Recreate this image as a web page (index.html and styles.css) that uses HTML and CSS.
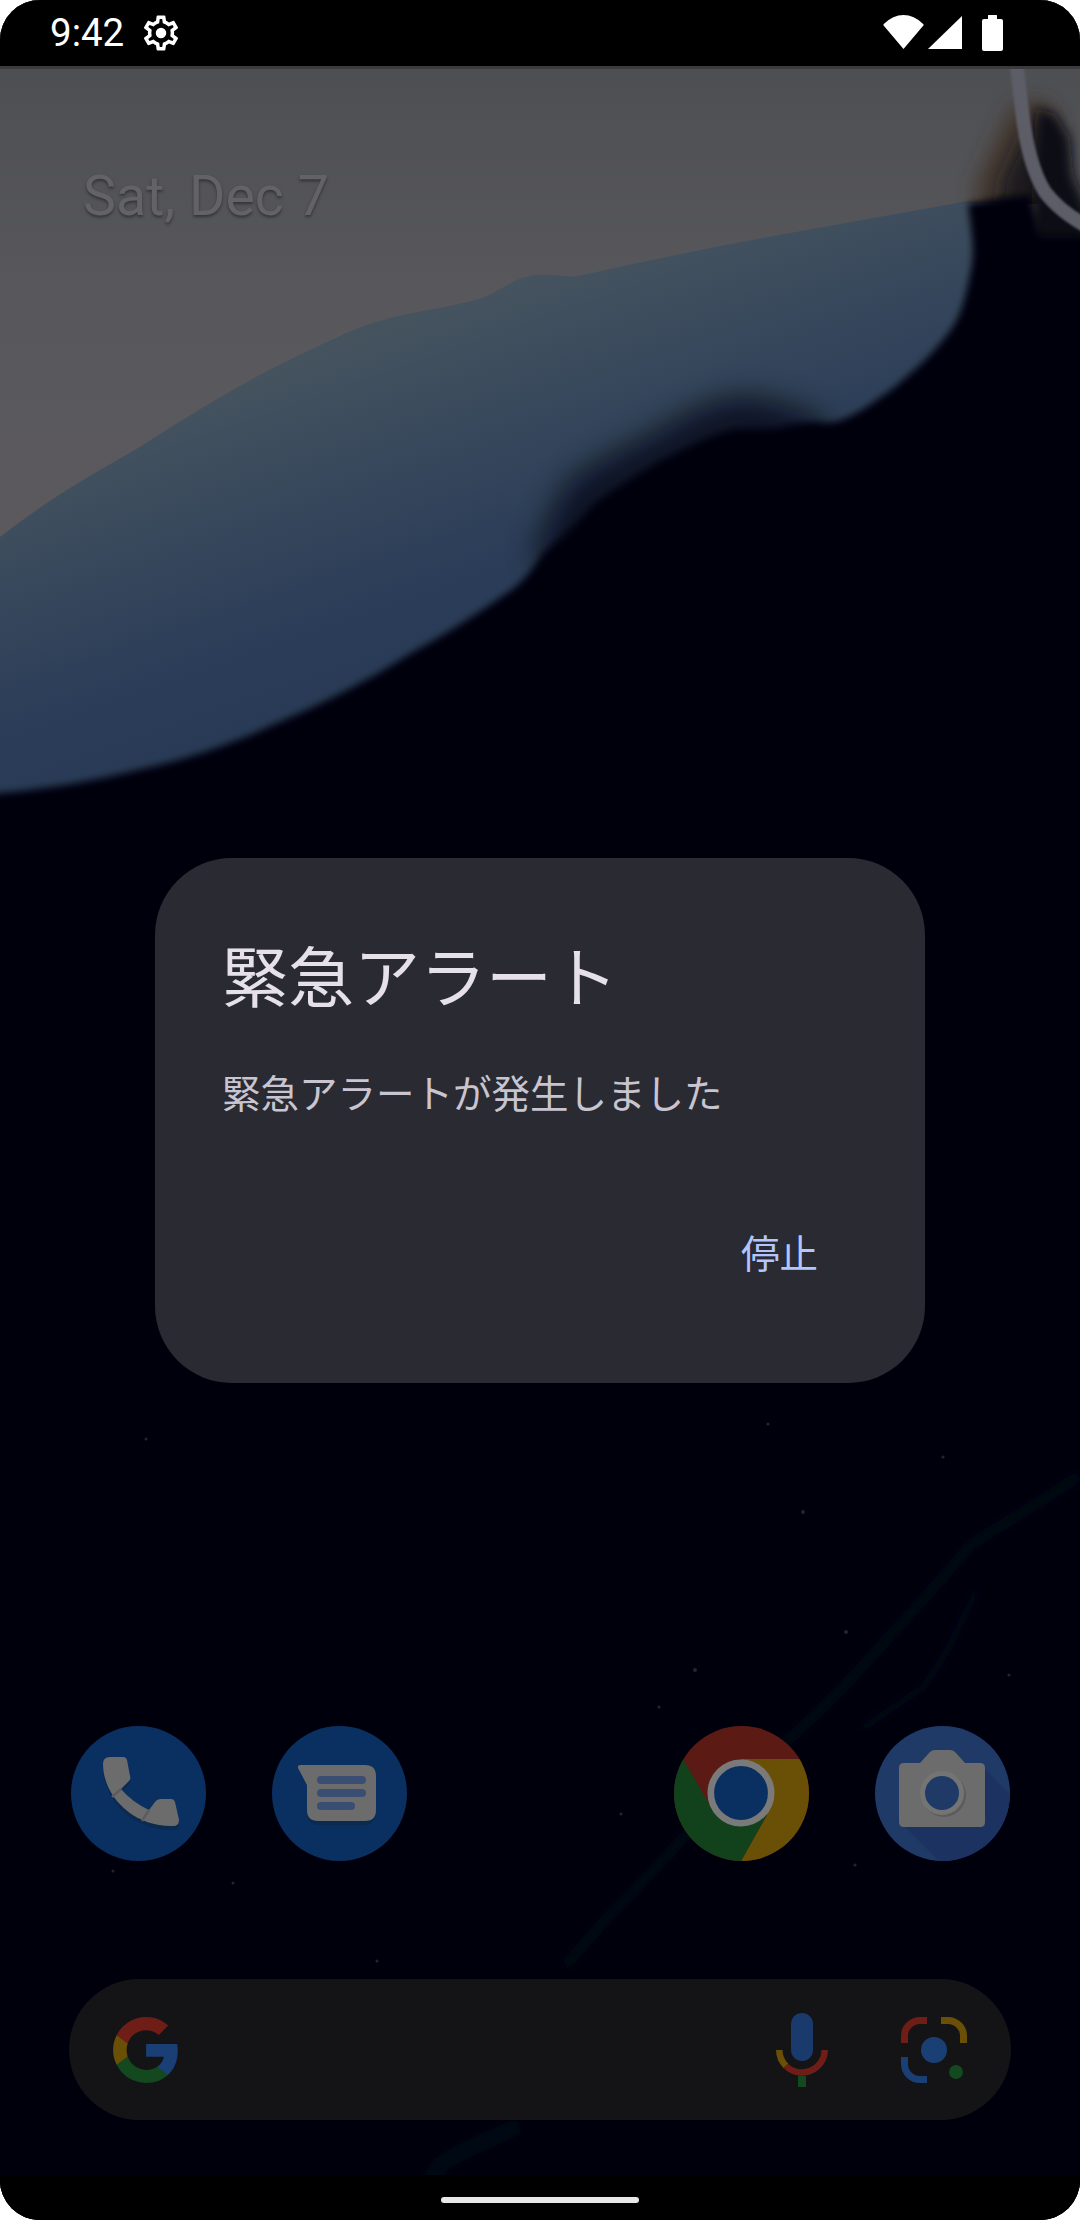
FILE: index.html
```html
<!DOCTYPE html>
<html lang="ja">
<head>
<meta charset="utf-8">
<title>緊急アラート</title>
<link rel="stylesheet" href="styles.css">
</head>
<body>
<div class="device">
  <div class="screen">
    <svg class="wallpaper" viewBox="0 0 1080 2220" width="1080" height="2220" aria-hidden="true">
      <defs>
        <linearGradient id="wpGrey" gradientUnits="userSpaceOnUse" x1="0" y1="69" x2="0" y2="520">
          <stop offset="0" stop-color="#4e4f53"/>
          <stop offset="0.5" stop-color="#58585c"/>
          <stop offset="1" stop-color="#5b595c"/>
        </linearGradient>
        <linearGradient id="wpBlue" gradientUnits="userSpaceOnUse" x1="480" y1="298" x2="645" y2="770">
          <stop offset="0" stop-color="#45535f"/>
          <stop offset="0.25" stop-color="#37485c"/>
          <stop offset="0.5" stop-color="#2b3d58"/>
          <stop offset="1" stop-color="#223451"/>
        </linearGradient>
        <clipPath id="aboveBlue"><rect x="900" y="60" width="180" height="144"/></clipPath>
        <filter id="blurS" x="-20%" y="-20%" width="140%" height="140%"><feGaussianBlur stdDeviation="3.500"/></filter>
        <filter id="blurF" x="-40%" y="-40%" width="180%" height="180%"><feGaussianBlur stdDeviation="6"/></filter>
        <filter id="blurM" x="-60%" y="-60%" width="220%" height="220%"><feGaussianBlur stdDeviation="9"/></filter>
        <filter id="blurL" x="-50%" y="-50%" width="200%" height="200%"><feGaussianBlur stdDeviation="16"/></filter>
        <filter id="blurT" x="-20%" y="-20%" width="140%" height="140%"><feGaussianBlur stdDeviation="1.200"/></filter>
      </defs>
      <rect width="1080" height="2220" fill="#03030a"/>
      <rect width="1080" height="820" fill="url(#wpGrey)"/>
      <path fill="url(#wpBlue)" d="M0 537 C60 490 110 465 138 448 C190 415 230 390 275 367 C310 350 330 340 358 328 C400 312 450 308 482 298 C505 288 515 278 530 276 C550 272 565 278 578 276 C640 262 700 250 757 239 L968 201 L1000 201 L1000 820 L0 820Z"/>
      <g clip-path="url(#aboveBlue)">
        <path fill="#3f3328" opacity="0.8" filter="url(#blurM)" d="M1012 105 L1045 100 L1060 120 L1040 230 L972 230 L976 180Z"/>
        <path fill="#17141a" opacity="0.85" filter="url(#blurM)" d="M1022 135 L1040 130 L1040 230 L996 230 L1002 180Z"/>
      </g>
      <path fill="#100f15" filter="url(#blurF)" d="M1036 108 L1055 114 L1070 138 L1073 175 L1090 212 L1090 245 L1030 245Z"/>
      <path fill="none" stroke="#03030a" stroke-width="40" opacity="0.8" filter="url(#blurL)" transform="translate(8 22)" d="M812 420 C790 412 765 400 737 397 C710 397 685 415 661 428 C630 445 605 455 578 474 C565 495 555 525 544 545"/>
      <path fill="#03030a" filter="url(#blurS)" d="M968 204 C972 235 975 250 971 270 C966 295 962 315 950 331 C930 358 912 372 895 387 C870 405 840 428 820 422 C805 422 790 425 778 428 C765 428 750 428 737 428 C710 433 685 448 661 460 C630 478 610 490 592 505 C575 525 560 540 544 552 C532 570 525 580 510 591 C480 612 445 635 413 652 C370 680 320 705 275 724 C230 745 185 760 138 770 C90 782 40 790 0 793 L-40 800 L-40 2260 L1120 2260 L1120 235 L1040 235 L1030 195 L1000 198Z"/>
      <path fill="none" stroke="#5c5d66" stroke-width="14" filter="url(#blurT)" d="M1016 60 L1022 110 Q1028 165 1045 192 Q1060 212 1090 228"/>
      <g fill="none" stroke="#050718" opacity="0.7" filter="url(#blurF)">
        <path stroke-width="12" d="M1080 1475 C1030 1510 1000 1525 972 1544 C940 1580 915 1610 887 1639 C865 1665 850 1680 827 1703 C780 1750 730 1790 683 1838 C655 1870 630 1895 608 1917 L564 1967"/>
        <path stroke-width="9" d="M977 1590 C960 1625 945 1660 922 1688 L860 1730"/>
        <path stroke-width="18" d="M520 2125 C490 2140 460 2150 440 2165 L419 2200"/>
      </g>
      <g fill="#24242d">
        <circle cx="695" cy="1670" r="2"/><circle cx="803" cy="1512" r="2"/>
        <circle cx="846" cy="1632" r="2"/><circle cx="659" cy="1707" r="1.600"/>
        <circle cx="621" cy="1814" r="1.600"/><circle cx="855" cy="1865" r="1.600"/>
        <circle cx="943" cy="1457" r="1.600"/><circle cx="768" cy="1424" r="1.600"/>
        <circle cx="377" cy="1961" r="1.500"/><circle cx="1009" cy="1675" r="1.600"/>
        <circle cx="113" cy="1871" r="1.500"/><circle cx="233" cy="1883" r="1.500"/>
        <circle cx="146" cy="1439" r="1.500"/>
      </g>
    </svg>

    <header class="status-bar">
      <span class="clock">9:42</span>
      <svg class="gear" viewBox="0 0 24 24" width="42" height="42" aria-hidden="true">
        <path fill="#fff" d="M19.43 12.98c.04-.32.07-.64.07-.98 0-.34-.03-.66-.07-.98l2.11-1.65c.19-.15.24-.42.12-.64l-2-3.46c-.09-.16-.26-.25-.44-.25-.06 0-.12.01-.17.03l-2.49 1c-.52-.4-1.08-.73-1.69-.98l-.38-2.65C14.46 2.18 14.25 2 14 2h-4c-.25 0-.46.18-.49.42l-.38 2.65c-.61.25-1.17.59-1.69.98l-2.49-1c-.06-.02-.12-.03-.18-.03-.17 0-.34.09-.43.25l-2 3.46c-.13.22-.07.49.12.64l2.11 1.65c-.04.32-.07.65-.07.98 0 .33.03.66.07.98l-2.11 1.65c-.19.15-.24.42-.12.64l2 3.46c.09.16.26.25.44.25.06 0 .12-.01.17-.03l2.49-1c.52.4 1.08.73 1.69.98l.38 2.65c.03.24.24.42.49.42h4c.25 0 .46-.18.49-.42l.38-2.65c.61-.25 1.17-.59 1.69-.98l2.49 1c.06.02.12.03.18.03.17 0 .34-.09.43-.25l2-3.46c.12-.22.07-.49-.12-.64l-2.11-1.65zm-1.98-1.71c.04.31.05.52.05.73 0 .21-.02.43-.05.73l-.14 1.13.89.7 1.08.84-.7 1.21-1.27-.51-1.04-.42-.9.68c-.43.32-.84.56-1.25.73l-1.06.43-.16 1.13-.2 1.35h-1.4l-.19-1.35-.16-1.13-1.06-.43c-.43-.18-.83-.41-1.23-.71l-.91-.7-1.06.43-1.27.51-.7-1.21 1.08-.84.89-.7-.14-1.13c-.03-.31-.05-.54-.05-.74s.02-.43.05-.73l.14-1.13-.89-.7-1.08-.84.7-1.21 1.27.51 1.04.42.9-.68c.43-.32.84-.56 1.25-.73l1.06-.43.16-1.13.2-1.35h1.39l.19 1.35.16 1.13 1.06.43c.43.18.83.41 1.23.71l.91.7 1.06-.43 1.27-.51.7 1.21-1.07.85-.89.7.14 1.13z"/>
        <circle cx="12" cy="12" r="3" fill="#fff"/>
      </svg>
      <div class="status-icons">
        <svg class="wifi" viewBox="0 0 41 34" width="41" height="34" aria-hidden="true">
          <path fill="#fff" d="M20.5 34 L0.6 10.5 Q0 9.6 0.8 9 Q10 0 20.5 0 Q31 0 40.2 9 Q41 9.6 40.4 10.5Z"/>
        </svg>
        <svg class="signal" viewBox="0 0 34 34" width="34" height="34" aria-hidden="true">
          <path fill="#fff" d="M34 0 V33 H0Z"/>
        </svg>
        <svg class="battery" viewBox="0 0 21 36" width="21" height="36" aria-hidden="true">
          <path fill="#fff" d="M6 0.5 Q6 0 6.5 0 H14.500 Q15 0 15 0.5 V4 H19 Q21 4 21 6 V34 Q21 36 19 36 H2 Q0 36 0 34 V6 Q0 4 2 4 H6Z"/>
        </svg>
      </div>
    </header>

    <main class="workspace">
      <p class="date">Sat, Dec 7</p>
    </main>

    <section class="hotseat">
      <div class="app">
        <svg viewBox="0 0 135 135" width="135" height="135" aria-hidden="true">
          <circle cx="67.500" cy="67.500" r="67.500" fill="#0a3062"/>
          <path fill="#0a2a50" transform="translate(0 4)" d="M39 31 H52 Q55 31 56 34 L59 50 Q60 53 58 55 L50 63 Q61 76 78 84 L84 76 Q86 73 90 73 H100 Q103 73 104 76 L108 94 Q108 100 102 100 C62 101 32 70 32 38 Q32 31 39 31Z"/>
          <path fill="#6c6c6c" d="M39 31 H52 Q55 31 56 34 L59 50 Q60 53 58 55 L50 63 Q61 76 78 84 L84 76 Q86 73 90 73 H100 Q103 73 104 76 L108 94 Q108 100 102 100 C62 101 32 70 32 38 Q32 31 39 31Z"/>
          <path fill="none" stroke="#5d5d5d" stroke-width="2.500" d="M41 71 L50 63 M71 95 L78 84"/>
        </svg>
      </div>
      <div class="app">
        <svg viewBox="0 0 135 135" width="135" height="135" aria-hidden="true">
          <circle cx="67.500" cy="67.500" r="67.500" fill="#0a3062"/>
          <rect x="35" y="43" width="69" height="56" rx="11" fill="#0b2a50"/>
          <path fill="#6c6c6c" d="M28 39 H93 Q104 39 104 50 V84 Q104 95 93 95 H46 Q35 95 35 84 V59 L26 42 Q25.500 39 28 39Z"/>
          <rect x="45" y="50" width="49" height="8" rx="4" fill="#3a4e74"/>
          <rect x="45" y="63" width="49" height="8" rx="4" fill="#3a4e74"/>
          <rect x="45" y="76" width="38" height="8" rx="4" fill="#3a4e74"/>
        </svg>
      </div>
      <div class="app app-empty"></div>
      <div class="app">
        <svg viewBox="0 0 135 135" width="135" height="135" aria-hidden="true">
          <defs><clipPath id="chromeClip"><circle cx="67.500" cy="67.500" r="67.500"/></clipPath></defs>
          <g clip-path="url(#chromeClip)">
            <rect width="135" height="135" fill="#5c1a14"/>
            <path fill="#6a5006" d="M67 33 H135 V135 H67 L93 89 L67 67Z"/>
            <path fill="#11421c" d="M9 33 L38 83 L93 89 L67 135 H0 V33Z"/>
          </g>
          <circle cx="67" cy="67" r="30.200" fill="#0a3062" stroke="#7a7a7a" stroke-width="6.600"/>
        </svg>
      </div>
      <div class="app">
        <svg viewBox="0 0 135 135" width="135" height="135" aria-hidden="true">
          <defs><clipPath id="cameraClip"><circle cx="67.500" cy="67.500" r="67.500"/></clipPath></defs>
          <circle cx="67.500" cy="67.500" r="67.500" fill="#203a68"/>
          <path clip-path="url(#cameraClip)" fill="#1c3260" d="M110 43 L140 73 V140 H69 L30 101 H110Z"/>
          <path fill="#6c6c6c" d="M29 37 H45 L55 26 Q57 24 60 24 H75 Q78 24 80 26 L90 37 H105 Q110 37 110 42 V96 Q110 101 105 101 H29 Q24 101 24 96 V42 Q24 37 29 37Z"/>
          <circle cx="69" cy="69" r="22" fill="#5c5c5c"/>
          <circle cx="67" cy="67" r="19.500" fill="#203a68" stroke="#747474" stroke-width="5"/>
        </svg>
      </div>
    </section>

    <section class="search-bar">
      <svg viewBox="1 1 21.600 22" width="65" height="66" aria-hidden="true">
        <path fill="#1a3f74" d="M22.560 12.250c0-.78-.07-1.530-.2-2.250H12v4.260h5.920c-.26 1.370-1.040 2.530-2.210 3.310v2.770h3.570c2.080-1.920 3.280-4.740 3.280-8.090z"/>
        <path fill="#14481f" d="M12 23c2.970 0 5.460-.98 7.280-2.660l-3.570-2.770c-.98.66-2.230 1.060-3.710 1.060-2.860 0-5.290-1.930-6.160-4.530H2.180v2.840C3.990 20.530 7.700 23 12 23z"/>
        <path fill="#6a5006" d="M5.840 14.090c-.22-.66-.35-1.360-.35-2.090s.13-1.430.35-2.090V7.070H2.180C1.430 8.550 1 10.220 1 12s.43 3.450 1.180 4.930l2.850-2.220.81-.62z"/>
        <path fill="#6e1e17" d="M12 5.380c1.620 0 3.060.56 4.210 1.640l3.150-3.150C17.450 2.090 14.970 1 12 1 7.700 1 3.990 3.470 2.180 7.070l3.660 2.840c.87-2.600 3.300-4.530 6.160-4.530z"/>
      </svg>
      <div class="search-actions">
        <svg viewBox="0 0 52 74" width="52" height="74" aria-hidden="true">
          <rect x="15" y="0" width="22" height="48" rx="11" fill="#1a3a6e"/>
          <path fill="none" stroke="#6a5006" stroke-width="6.500" d="M3.250 37 A22.750 22.750 0 0 0 10 53"/>
          <path fill="none" stroke="#6e1e17" stroke-width="6.500" d="M10 53 A22.750 22.750 0 0 0 48.750 37"/>
          <rect x="22" y="63" width="8" height="11" fill="#14481f"/>
        </svg>
        <svg viewBox="0 0 66 66" width="66" height="66" aria-hidden="true">
          <path fill="none" stroke="#6e1e17" stroke-width="7" d="M3.500 26 V19 A15.500 15.500 0 0 1 19 3.500 H26"/>
          <path fill="none" stroke="#6a5006" stroke-width="7" d="M40 3.500 H47 A15.500 15.500 0 0 1 62.500 19 V26"/>
          <path fill="none" stroke="#1a3f74" stroke-width="7" d="M3.500 40 V47 A15.500 15.500 0 0 0 19 62.500 H26"/>
          <circle cx="33" cy="33" r="13" fill="#1a3f74"/>
          <circle cx="55" cy="55" r="7" fill="#14481f"/>
        </svg>
      </div>
    </section>

    <footer class="nav-bar"><span class="nav-pill"></span></footer>

    <div class="scrim">
      <div class="dialog" role="alertdialog">
        <h1 class="dialog-title">緊急アラート</h1>
        <p class="dialog-body">緊急アラートが発生しました</p>
        <div class="dialog-actions"><span class="dialog-button">停止</span></div>
      </div>
    </div>
  </div>
</div>
</body>
</html>
```

FILE: styles.css
```css
* { box-sizing: border-box; }

html, body {
  margin: 0;
  padding: 0;
  width: 1080px;
  height: 2220px;
  overflow: hidden;
  background: #fff;
}

.device {
  width: 1080px;
  height: 2220px;
  background: #fff;
}

.screen {
  position: relative;
  width: 100%;
  height: 100%;
  display: flex;
  flex-direction: column;
  border-radius: 40px;
  overflow: hidden;
  background: #03030a;
  font-family: Roboto, "Noto Sans CJK JP", sans-serif;
}

.wallpaper {
  position: absolute;
  inset: 0;
  display: block;
}

.status-bar {
  position: relative;
  flex: none;
  height: 69px;
  display: flex;
  align-items: center;
  padding: 0 77px 0 50px;
  background: #000;
  border-bottom: 3px solid #3b3b3d;
}

.clock {
  color: #fff;
  font-size: 38.500px;
  line-height: 1;
  width: 90px;
}

.gear { display: block; }

.status-icons {
  margin-left: auto;
  display: flex;
  align-items: center;
}

.wifi, .signal, .battery { display: block; }
.wifi { margin: 0 4px 2px 0; }
.signal { margin-right: 20px; }

.workspace {
  position: relative;
  flex: 1;
  min-height: 0;
  padding: 96px 0 0 83px;
}

.date {
  margin: 0;
  color: #636366;
  font-size: 55.500px;
  line-height: 64px;
  text-shadow: 0 2px 3px rgba(30, 30, 32, 0.6);
}

.hotseat {
  position: relative;
  flex: none;
  display: grid;
  grid-template-columns: repeat(5, 201px);
  padding-left: 38px;
  margin-bottom: 118px;
}

.app {
  height: 135px;
  display: flex;
  justify-content: center;
}

.app svg { display: block; }

.search-bar {
  position: relative;
  flex: none;
  height: 141px;
  margin: 0 69px 55px;
  padding: 0 44px;
  display: flex;
  align-items: center;
  justify-content: space-between;
  border-radius: 71px;
  background: #141416;
}

.search-bar svg { display: block; }

.search-actions {
  display: flex;
  align-items: center;
  gap: 73px;
}

.nav-bar {
  position: relative;
  flex: none;
  height: 45px;
  padding-top: 22px;
  background: #000;
  display: flex;
  justify-content: center;
}

.nav-pill {
  width: 198px;
  height: 6px;
  border-radius: 3px;
  background: #e8e8e8;
}

.scrim {
  position: absolute;
  inset: 0;
  padding-top: 21px;
  display: flex;
  align-items: center;
  justify-content: center;
}

.dialog {
  width: 770px;
  height: 525px;
  padding: 71px 77px 0 67px;
  border-radius: 77px;
  background: #292a32;
  font-family: "Noto Sans CJK JP", sans-serif;
}

.dialog-title {
  margin: 0;
  color: #e6e1e9;
  font-size: 66px;
  font-weight: 400;
  line-height: 88px;
}

.dialog-body {
  margin: 46px 0 0;
  color: #c8c5d0;
  font-size: 38.500px;
  line-height: 56px;
}

.dialog-actions {
  margin-top: 104px;
  display: flex;
  justify-content: flex-end;
  padding-right: 30px;
}

.dialog-button {
  color: #b3c5ff;
  font-size: 38.500px;
  line-height: 56px;
}
```
